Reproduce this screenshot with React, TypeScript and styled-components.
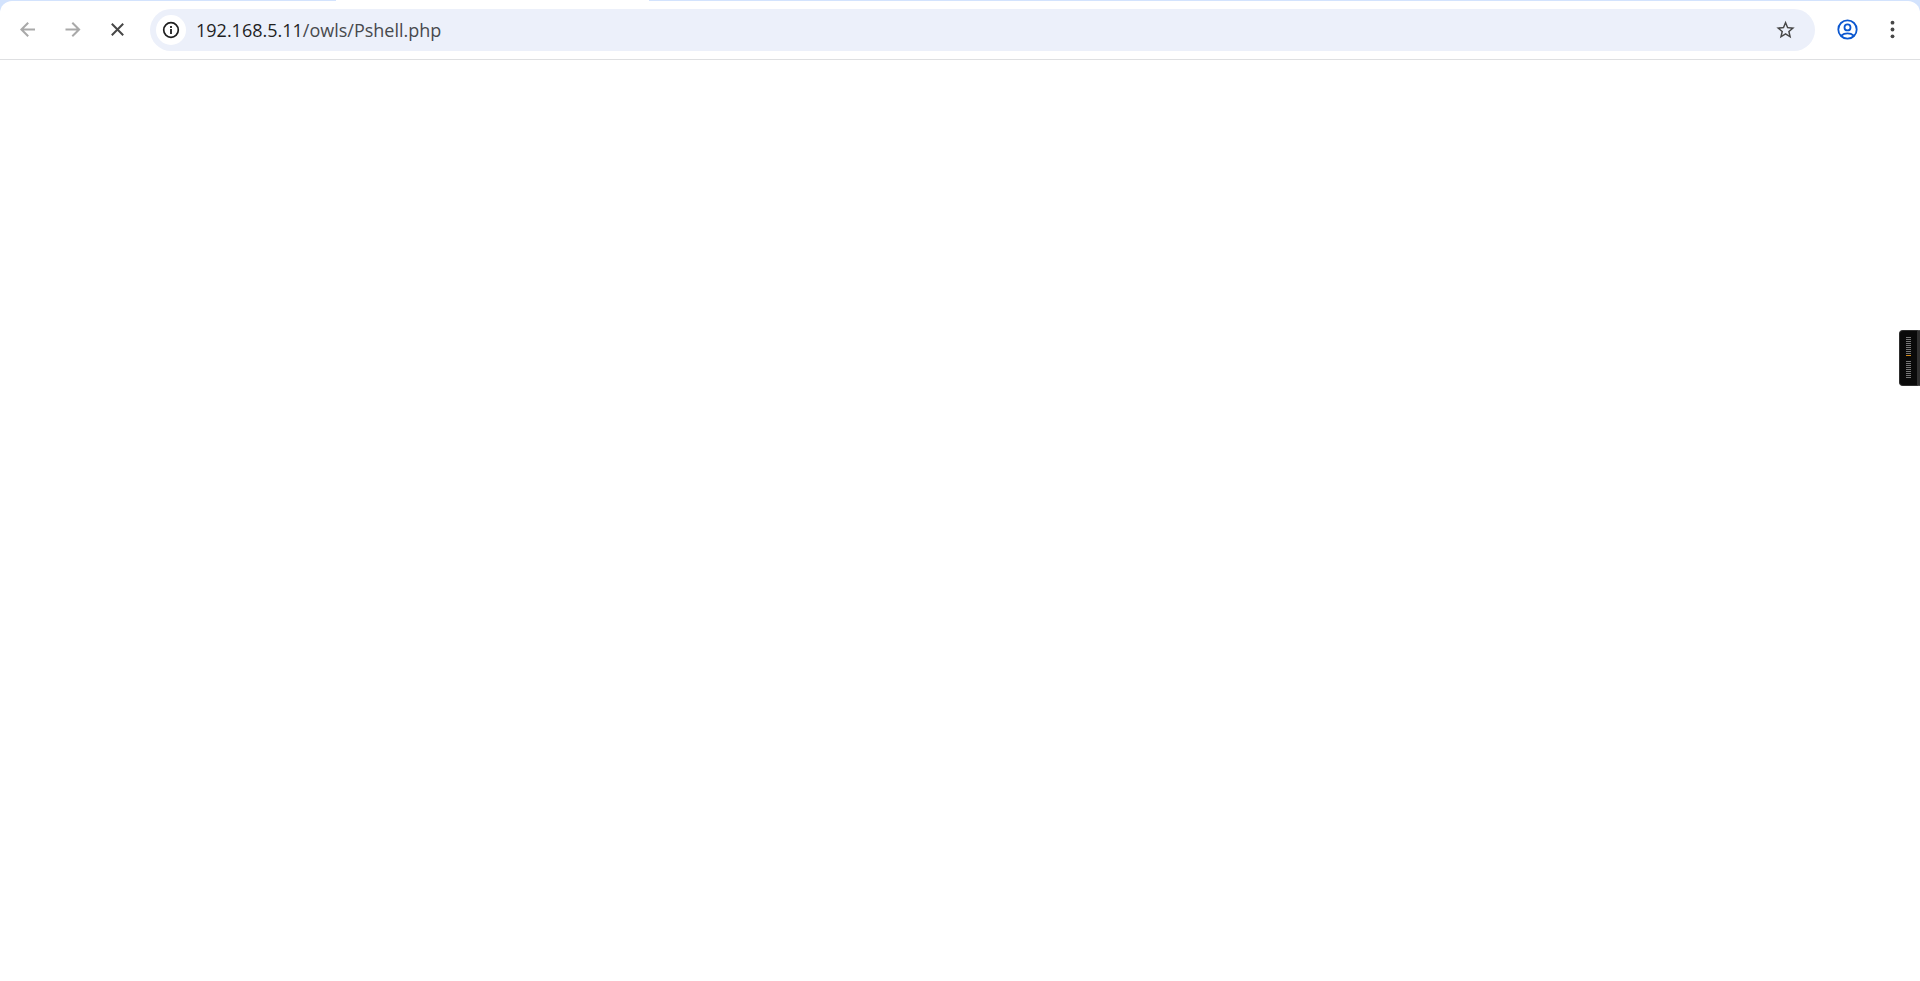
import React from 'react';
import styled, { createGlobalStyle } from 'styled-components';

const GlobalStyle = createGlobalStyle`
  *, *::before, *::after { box-sizing: border-box; }
  body {
    margin: 0;
    background: #ffffff;
    font-family: "Open Sans", "Noto Sans", sans-serif;
  }
`;

const Window = styled.div`
  display: flex;
  flex-direction: column;
  min-height: 100vh;
`;

const TabStrip = styled.div`
  display: flex;
  height: 1px;
  padding-left: 336px;
  background: #d3e3fd;
`;

const ActiveTab = styled.div`
  width: 313px;
  background: #ffffff;
`;

const ToolbarFrame = styled.header`
  background: #d3e3fd;
`;

const Toolbar = styled.div`
  display: flex;
  align-items: center;
  height: 59px;
  padding: 0 10px;
  background: #ffffff;
  border-bottom: 1px solid #dedfe1;
  border-radius: 12px 12px 0 0;
`;

const Navigation = styled.nav`
  display: flex;
  gap: 9px;
  margin-right: 14px;
`;

const IconButton = styled.button<{ $color?: string }>`
  display: flex;
  align-items: center;
  justify-content: center;
  flex: none;
  width: 36px;
  height: 36px;
  padding: 0;
  border: 0;
  border-radius: 50%;
  background: transparent;
  color: ${({ $color }) => $color ?? '#474747'};
`;

const AddressBar = styled.div`
  display: flex;
  align-items: center;
  flex: 1;
  min-width: 0;
  height: 42px;
  padding: 0 12px 0 6px;
  border-radius: 21px;
  background: #ecf0fa;
`;

const SiteInfoButton = styled(IconButton)`
  width: 30px;
  height: 30px;
  background: #ffffff;
`;

const Address = styled.div`
  flex: 1;
  min-width: 0;
  padding-left: 10px;
  overflow: hidden;
  font-size: 18px;
  line-height: 28px;
  white-space: nowrap;
  color: #47494d;
`;

const Host = styled.span`
  color: #1f1f1f;
`;

const Actions = styled.div`
  display: flex;
  gap: 9px;
  margin-left: 14px;
`;

const Page = styled.main`
  flex: 1;
`;

const SideHandle = styled.aside`
  position: fixed;
  top: 330px;
  right: 0;
  display: flex;
  width: 21px;
  height: 56px;
  overflow: hidden;
  border: 1px solid #2e2e2e;
  border-right: 3px solid #303030;
  border-radius: 4px 0 0 4px;
  background: #0a0a0a;
`;

const SideMeter = styled.svg`
  display: block;
  margin: 6px 0 0 6px;
`;

const METER_LINES = [0, 2, 4, 6, 8, 10, 12, 14, 16, 18, 24, 26, 28, 30, 32, 34, 36, 38, 40];
const HIGHLIGHTED_LINE = 18;

export default function App() {
  return (
    <Window>
      <GlobalStyle />
      <ToolbarFrame>
        <TabStrip>
          <ActiveTab />
        </TabStrip>
        <Toolbar>
          <Navigation>
            <IconButton aria-label="Back" $color="#a9a9a9">
              <svg width="16" height="16" fill="none" stroke="currentColor" strokeWidth="2">
                <path d="M15 7.5H1.5M8.2.7L1.4 7.5l6.8 6.8" />
              </svg>
            </IconButton>
            <IconButton aria-label="Forward" $color="#a9a9a9">
              <svg width="16" height="16" fill="none" stroke="currentColor" strokeWidth="2">
                <path d="M.5 7.5H14M7.3.7l6.8 6.8-6.8 6.8" />
              </svg>
            </IconButton>
            <IconButton aria-label="Stop loading">
              <svg width="14" height="14" fill="none" stroke="currentColor" strokeWidth="2">
                <path d="M.8.8l11.4 11.4M12.2.8L.8 12.2" />
              </svg>
            </IconButton>
          </Navigation>
          <AddressBar>
            <SiteInfoButton aria-label="View site information" $color="#1f1f1f">
              <svg width="18" height="18" fill="none" stroke="currentColor">
                <circle cx="9" cy="9" r="7.3" strokeWidth="1.7" />
                <path d="M9 8v5M9 5v2" strokeWidth="1.8" />
              </svg>
            </SiteInfoButton>
            <Address>
              <Host>192.168.5.11</Host>/owls/Pshell.php
            </Address>
            <IconButton aria-label="Bookmark this page">
              <svg width="22" height="22" viewBox="-.6 0 24 24" fill="currentColor">
                <path d="M22 9.24l-7.19-.62L12 2 9.19 8.63 2 9.24l5.46 4.73L5.82 21 12 17.27 18.18 21l-1.63-7.03L22 9.24zM12 15.4l-3.76 2.27 1-4.28-3.32-2.88 4.38-.38L12 6.1l1.71 4.04 4.38.38-3.32 2.88 1 4.28L12 15.4z" />
              </svg>
            </IconButton>
          </AddressBar>
          <Actions>
            <IconButton aria-label="Profile" $color="#0b57d0">
              <svg width="22" height="22" viewBox="-.5 .5 22 22" fill="none" stroke="currentColor" strokeWidth="1.8">
                <circle cx="11" cy="11" r="9.2" />
                <circle cx="11" cy="8.9" r="3" />
                <path d="M4.6 17.2c3.7-3 9.1-3 12.8 0" />
              </svg>
            </IconButton>
            <IconButton aria-label="Browser menu">
              <svg width="6" height="20" viewBox="-.5 .5 6 20" fill="currentColor">
                <circle cx="3" cy="3.2" r="1.9" />
                <circle cx="3" cy="10" r="1.9" />
                <circle cx="3" cy="16.8" r="1.9" />
              </svg>
            </IconButton>
          </Actions>
        </Toolbar>
      </ToolbarFrame>
      <Page />
      <SideHandle aria-label="Side panel handle">
        <SideMeter width="5" height="42" shapeRendering="crispEdges">
          {METER_LINES.map((y) => (
            <rect key={y} y={y} width="5" height="1" fill={y === HIGHLIGHTED_LINE ? '#d08a1c' : '#777777'} />
          ))}
        </SideMeter>
      </SideHandle>
    </Window>
  );
}
